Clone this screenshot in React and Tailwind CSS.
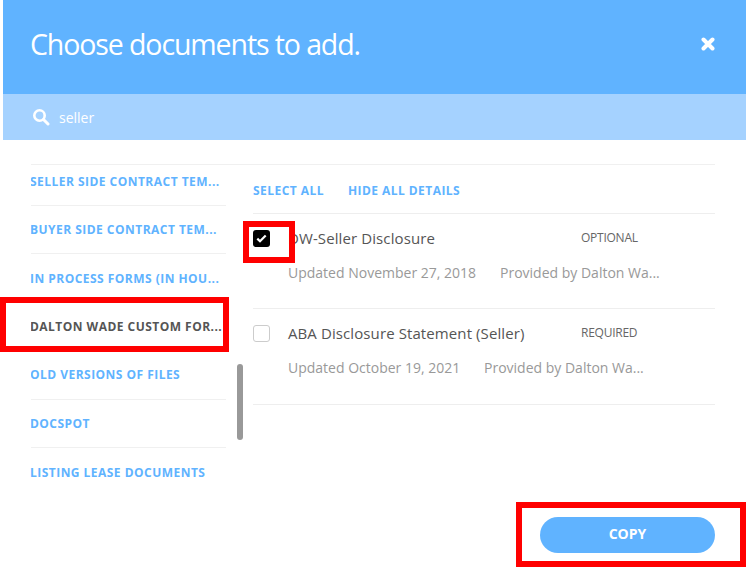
import React from "react";

const font = { fontFamily: '"Open Sans", "Noto Sans", sans-serif' };

function SideItem({ label, active, first }) {
  return (
    <div
      className={`flex items-center overflow-hidden whitespace-nowrap text-[12px] font-bold tracking-[0.47px] border-b border-[#f0f0f0] ${
        first ? "h-[41px] pb-[7px]" : "h-[48.4px] pt-[1px]"
      } ${active ? "text-[#555555]" : "text-[#60b3ff]"}`}
    >
      <span className="-ml-[1px]">{label}</span>
    </div>
  );
}

function Doc({ title, date, by, tag, checked, datew }) {
  return (
    <div className="h-[95.4px] border-b border-[#eeeeee]">
      <div className="flex items-center pt-[14px]">
        {checked ? (
          <div className="w-[17px] h-[17px] rounded-[3px] bg-black flex items-center justify-center">
            <svg width="11" height="9" viewBox="0 0 11 9" fill="none">
              <path d="M1.3 4.6 L4 7.2 L9.7 1.5" stroke="#fff" strokeWidth="2.2" />
            </svg>
          </div>
        ) : (
          <div className="w-[17px] h-[17px] rounded-[3px] border border-[#cccccc] bg-white" />
        )}
        <div className="ml-[18px] w-[293px] text-[15px] leading-[20px] tracking-[0.1px] text-[#555555] whitespace-nowrap">{title}</div>
        <div className="text-[12px] leading-[20px] text-[#666666] tracking-[-0.25px]">{tag}</div>
      </div>
      <div className="flex mt-[15px] pl-[35px] text-[14px] leading-[20px] text-[#999999] whitespace-nowrap">
        <span className={datew}>{date}</span>
        <span>{by}</span>
      </div>
    </div>
  );
}

export default function App() {
  return (
    <div style={font} className="relative w-[746px] h-[567px] bg-white pl-[3px] overflow-hidden">
      <header className="h-[94px] bg-[#60b3ff] flex items-center justify-between pl-[27px] pr-[31px]">
        <h1 className="text-[28.5px] font-normal text-white tracking-[-1.1px] leading-none pb-[6px]">
          Choose documents to add.
        </h1>
        <svg width="14" height="14" viewBox="0 0 14 14" fill="none" className="mb-[6px]">
          <path d="M2.5 2.5 L11.5 11.5 M11.5 2.5 L2.5 11.5" stroke="#fff" strokeWidth="4" strokeLinecap="round" />
        </svg>
      </header>
      <div className="h-[46px] bg-[#a5d2ff] flex items-center pl-[29px]">
        <svg width="18" height="18" viewBox="0 0 18 18" fill="none">
          <circle cx="7.5" cy="7.5" r="5.2" stroke="#fff" strokeWidth="2.6" />
          <path d="M11.5 11.5 L16 16" stroke="#fff" strokeWidth="3" strokeLinecap="round" />
        </svg>
        <span className="ml-[9px] text-[14px] text-white">seller</span>
      </div>
      <main className="pt-[24px] pl-[28px] pr-[31px]">
        <div className="flex border-t border-[#f0f0f0]">
          <aside className="w-[195px] shrink-0">
            <SideItem first label="SELLER SIDE CONTRACT TEM..." />
            <SideItem label="BUYER SIDE CONTRACT TEM..." />
            <SideItem label="IN PROCESS FORMS (IN HOU..." />
            <SideItem active label="DALTON WADE CUSTOM FOR..." />
            <SideItem label="OLD VERSIONS OF FILES" />
            <SideItem label="DOCSPOT" />
            <div className="h-[48px] pt-[2px] flex items-center text-[12px] font-bold tracking-[0.47px] text-[#60b3ff]">
              <span className="-ml-[1px]">LISTING LEASE DOCUMENTS</span>
            </div>
          </aside>
          <section className="ml-[27px] flex-1">
            <div className="h-[49px] pt-[3px] border-b border-[#eeeeee] flex items-center gap-[24px] text-[12px] font-bold tracking-[0.45px] text-[#60b3ff]">
              <span>SELECT ALL</span>
              <span>HIDE ALL DETAILS</span>
            </div>
            <Doc checked title="DW-Seller Disclosure" tag="OPTIONAL" date="Updated November 27, 2018" by="Provided by Dalton Wa..." datew="w-[212px]" />
            <Doc title="ABA Disclosure Statement (Seller)" tag="REQUIRED" date="Updated October 19, 2021" by="Provided by Dalton Wa..." datew="w-[196px]" />
          </section>
        </div>
        <div className="flex justify-end mt-[21px]">
          <button className="w-[175px] h-[36px] pb-[3px] rounded-full bg-[#60b3ff] text-white text-[14px] font-bold">COPY</button>
        </div>
      </main>

      {/* scrollbar thumb */}
      <div className="absolute left-[237px] top-[364px] w-[6px] h-[76px] rounded-[3px] bg-[#999999]" />
      {/* red annotation boxes */}
      <div className="absolute left-[243px] top-[221px] w-[52px] h-[42px] border-[6px] border-[#ff0000]" />
      <div className="absolute left-0 top-[297px] w-[229px] h-[55px] border-[6px] border-[#ff0000]" />
      <div className="absolute left-[516px] top-[502px] w-[230px] h-[65px] border-[6px] border-[#ff0000]" />
    </div>
  );
}
